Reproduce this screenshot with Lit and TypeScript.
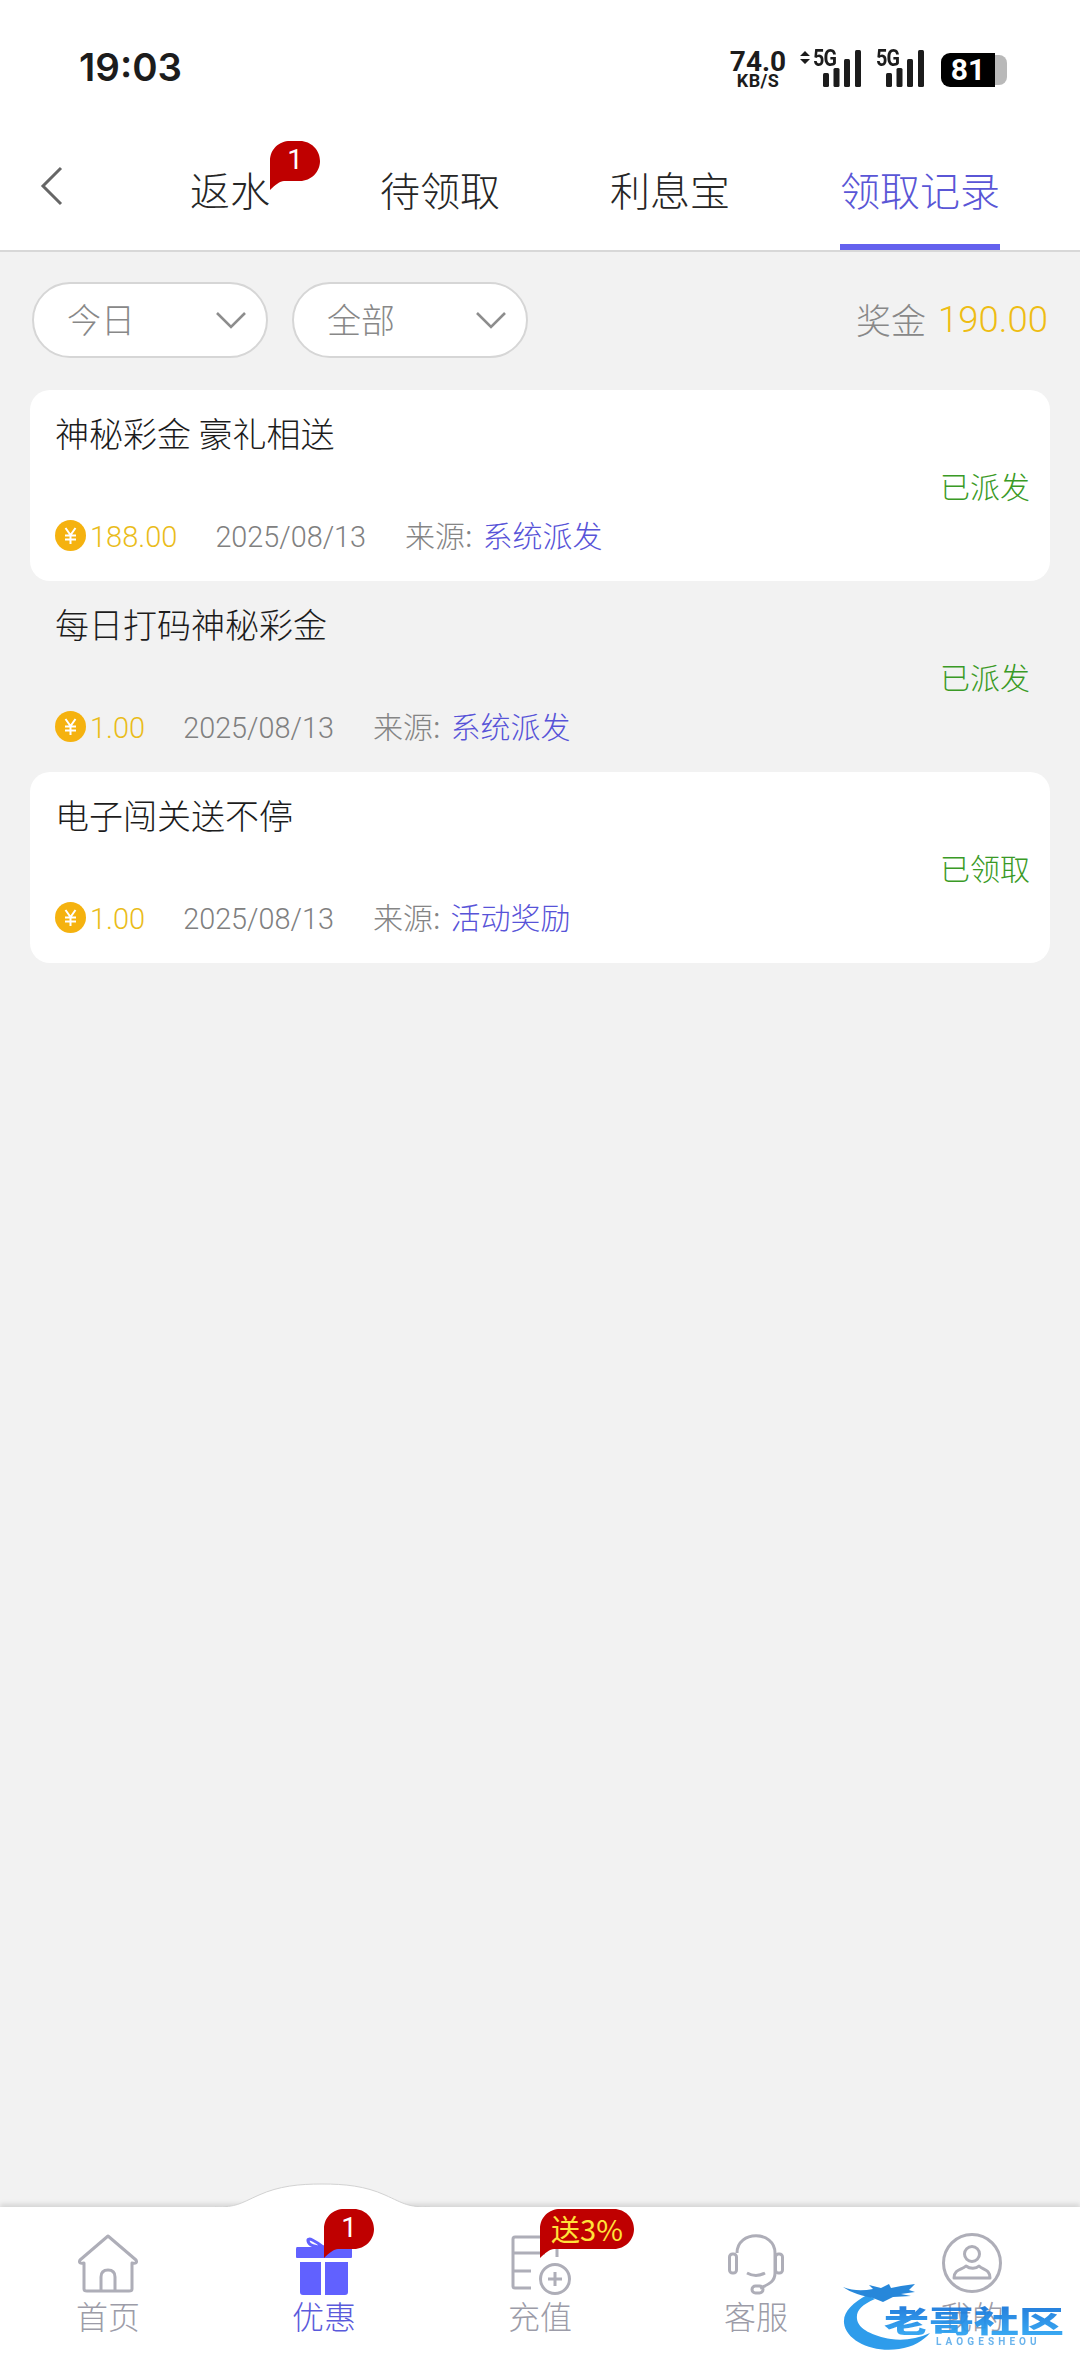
import { LitElement, html, css, svg } from "lit";
import { customElement } from "lit/decorators.js";

const bubble = (w: number) => svg`<svg class="bubble-bg" width="${w}" height="49" viewBox="0 0 ${w} 49"><path d="M0 49 C0 40 0 30 0 20 C0 8 9 0 20 0 H${w - 20} C${w - 9} 0 ${w} 9 ${w} 20 C${w} 31 ${w - 9} 40 ${w - 20} 40 H14 C10 40 5 44 0 49Z" fill="#bf0000"/></svg>`;

const chevron = html`<svg class="chev" width="32" height="18" viewBox="0 0 32 18"><path d="M2 2 L16 16 L30 2" fill="none" stroke="#8d8d8d" stroke-width="2.6"/></svg>`;

const coin = html`<svg class="coin" width="31" height="31" viewBox="0 0 31 31"><circle cx="15.5" cy="15.5" r="15.5" fill="#f5b20f"/><path d="M10.5 8 L15.5 15 L20.5 8 M10 15.5 H21 M10 19.5 H21 M15.5 15 V24" fill="none" stroke="#fff" stroke-width="2"/></svg>`;

const records = [
  { title: "神秘彩金 豪礼相送", status: "已派发", amount: "188.00", source: "系统派发", bg: true },
  { title: "每日打码神秘彩金", status: "已派发", amount: "1.00", source: "系统派发", bg: false },
  { title: "电子闯关送不停", status: "已领取", amount: "1.00", source: "活动奖励", bg: true },
];

const bars = html`<svg width="38" height="37" viewBox="0 0 38 37"><g fill="#1c1c1c"><rect x="0" y="23" width="6" height="14" rx="1.5"/><rect x="10.5" y="18" width="6" height="19" rx="1.5"/><rect x="21" y="9" width="6" height="28" rx="1.5"/><rect x="32" y="0" width="6" height="37" rx="1.5"/></g></svg>`;

@customElement("app-root")
export class AppRoot extends LitElement {
  static styles = css`
    :host { display: flex; flex-direction: column; width: 1080px; height: 2378px; background: #f2f2f2;
      font-family: "Noto Sans CJK SC", Roboto, sans-serif; font-weight: 300; overflow: hidden; }
    .top { background: #fff; border-bottom: 2px solid #d8d8d8; height: 250px; display: flex; flex-direction: column; }
    .status { height: 136px; display: flex; align-items: flex-start; padding: 48px 73px 0 79px; justify-content: space-between; box-sizing: border-box; }
    .time { font: 600 38.5px/38px Inter, sans-serif; color: #1c1c1c; }
    .sys { display: flex; align-items: flex-start; }
    .speed { width: 58px; display: flex; flex-direction: column; align-items: center; color: #1c1c1c; margin-top: 1.5px; }
    .speed b { font: 700 28px/23px Roboto, sans-serif; }
    .speed i { font: 700 18px/15px Roboto, sans-serif; letter-spacing: .4px; font-style: normal; }
    .sig { position: relative; display: flex; align-items: flex-start; height: 40px; margin-top: 2px; margin-left: 2px; }
    .sig.first { margin-left: 13px; }
    .sig .g { position: absolute; left: 13px; top: -1px; font: 700 23px/20px Roboto, sans-serif; color: #1c1c1c; letter-spacing: -1px; transform: scaleX(.86); transform-origin: 0 50%; }
    .sig svg { margin-left: 23px; }
    .sig svg.arrows { position: absolute; top: 1px; left: 0; margin-left: 0; }
    .bat { margin-left: 17px; display: flex; height: 34px; margin-top: 5px; }
    .bat b { width: 54px; background: #000; color: #fff; border-radius: 9px 0 0 9px; text-align: center; font: 700 30px/34px Roboto, sans-serif; }
    .bat i { width: 12px; margin: 2px 0; background: #b9b9b9; border-radius: 0 8px 8px 0; }
    .tabs { display: flex; align-items: stretch; flex: 1; padding-left: 40px; }
    .back { margin: 30px 126px 0 0; width: 24px; height: 40px; }
    .tab { position: relative; font-size: 40px; line-height: 56px; color: #262626; margin-right: 110px; padding-top: 25px; box-sizing: border-box; }
    .tab.on { color: #5a56d6; margin-right: 0; border-bottom: 6px solid #6461ee; height: 114px; }
    .bubble { position: absolute; display: flex; justify-content: center; }
    .bubble-bg { display: block; }
    .bubble span { position: absolute; left: 0; right: 0; top: 0; text-align: center; color: #fff; height: 40px; font: 400 28px/38px Roboto, sans-serif; }
    .tab .bubble { left: 80px; top: 5px; }
    main { flex: 1; min-height: 0; }
    .filters { display: flex; align-items: center; padding: 30px 32px 0; gap: 24px; }
    .pill { width: 236px; height: 76px; box-sizing: border-box; border: 2px solid #d6d6d6; border-radius: 38px; background: #fff; display: flex; align-items: center; justify-content: space-between; padding: 0 19px 3px 33px; color: #888; font-size: 34px; }
    .chev { margin-top: 3px; }
    .bonus { margin-left: auto; color: #888; font-size: 35px; display: flex; align-items: center; gap: 12px; padding-bottom: 3px; }
    .bonus b { font: 300 36.5px/50px Roboto, sans-serif; color: #eebd14; padding-top: 3px; }
    .list { margin: 32px 30px 0; }
    .card { height: 191px; box-sizing: border-box; border-radius: 20px; padding: 20px 20px 0 25px; }
    .card.bg { background: #fff; }
    .title { font-size: 34px; line-height: 46px; color: #1c1c1c; }
    .state { text-align: right; font-size: 30px; line-height: 40px; color: #3a9a26; margin-top: 9px; }
    .meta { display: flex; align-items: center; margin-top: 8.5px; height: 40px; font-size: 30px; color: #858585; }
    .coin { margin-right: 4px; flex: none; margin-top: 4px; }
    .amount { font: 300 29px/40px Roboto, sans-serif; color: #eabc1a; margin-right: 38px; padding-top: 6px; }
    .date { font: 300 28.8px/40px Roboto, sans-serif; color: #808080; margin-right: 39px; padding-top: 6px; }
    .src { color: #5753d8; margin-left: 10px; }
    nav { position: relative; height: 171px; background: #fff; display: flex; box-shadow: 0 -3px 5px rgba(0,0,0,.12); }
    .bump { position: absolute; left: 215px; top: -24px; }
    .item { position: relative; width: 216px; flex: none; display: flex; flex-direction: column; align-items: center; padding-top: 26px; box-sizing: border-box; font-size: 32px; line-height: 46px; color: #9c9ca8; }
    .item svg.ic { display: block; height: 62px; margin-bottom: -3px; }
    .item.on { color: #5a5adb; }
    .item .bubble { left: 108px; top: 2px; }
    .bubble.b span { color: #ffe23a; font: 400 29px/38px "Noto Sans CJK SC", Roboto, sans-serif; white-space: nowrap; }
    .mark { position: absolute; left: 843px; top: 76px; width: 228px; height: 70px; opacity: .94; }
    .mark svg { position: absolute; left: 0; top: 0; filter: blur(.5px); }
    .mark .cn { position: absolute; left: 41px; top: 11px; font: 900 45px/50px "Noto Sans CJK SC", sans-serif; color: #1e90e8;
      background: linear-gradient(#1672d8, #2ea4f2); -webkit-background-clip: text; background-clip: text; -webkit-text-fill-color: transparent;
      white-space: nowrap; transform: scaleY(.66); transform-origin: 50% 50%; }
    .mark .en { position: absolute; left: 93px; top: 53px; font: 700 10px/12px Roboto, sans-serif; color: #62b0ec; letter-spacing: 4.1px; white-space: nowrap; }
  `;

  render() {
    const sc = "#aeaeb8";
    return html`
      <div class="top">
        <div class="status">
          <div class="time">19:03</div>
          <div class="sys">
            <div class="speed"><b>74.0</b><i>KB/S</i></div>
            <div class="sig first">
              <svg class="arrows" width="10" height="13" viewBox="0 0 10 13"><path d="M5 0 L10 5 H0Z M5 13 L0 8 H10Z" fill="#1c1c1c"/></svg>
              <span class="g">5G</span>${bars}
            </div>
            <div class="sig"><span class="g">5G</span>${bars}</div>
            <div class="bat"><b>81</b><i></i></div>
          </div>
        </div>
        <div class="tabs">
          <svg class="back" viewBox="0 0 24 40"><path d="M21 2 L3 20 L21 38" fill="none" stroke="#666" stroke-width="3"/></svg>
          <div class="tab">返水<div class="bubble">${bubble(50)}<span>1</span></div></div>
          <div class="tab">待领取</div>
          <div class="tab">利息宝</div>
          <div class="tab on">领取记录</div>
        </div>
      </div>
      <main>
        <div class="filters">
          <div class="pill">今日${chevron}</div>
          <div class="pill">全部${chevron}</div>
          <div class="bonus">奖金<b>190.00</b></div>
        </div>
        <div class="list">
          ${records.map(r => html`
            <div class="card ${r.bg ? "bg" : ""}">
              <div class="title">${r.title}</div>
              <div class="state">${r.status}</div>
              <div class="meta">${coin}<span class="amount">${r.amount}</span><span class="date">2025/08/13</span>来源:<span class="src">${r.source}</span></div>
            </div>`)}
        </div>
      </main>
      <nav>
        <svg class="bump" width="215" height="26" viewBox="0 0 215 26"><path d="M0 24 C22 24 24 21 44 12 C64 3 84 1 107 1 C130 1 150 3 170 12 C190 21 192 24 215 24 V26 H0Z" fill="#fff" stroke="#d2d2d2" stroke-width="1"/><rect x="0" y="24" width="215" height="3" fill="#fff"/></svg>
        <div class="item">
          <svg class="ic" width="64" height="62" viewBox="0 0 64 62"><path d="M4 27 L32 3 L60 27 Q62 31 56 30 V56 Q56 58 53 58 H11 Q8 58 8 56 V30 Q2 31 4 27Z M25 58 V44 Q25 37 32 37 Q39 37 39 44 V58" fill="none" stroke="${sc}" stroke-width="3" stroke-linejoin="round"/></svg>
          首页
        </div>
        <div class="item on">
          <svg class="ic" width="58" height="62" viewBox="0 0 58 62"><path d="M28 14 C22 9 12 3 13 8 C14 13 22 14 28 14Z M29 14 C35 9 45 3 44 8 C43 13 36 14 29 14Z" fill="none" stroke="#6161ff" stroke-width="3"/><path d="M2 14 H56 Q57 14 57 16 V24 Q57 25 56 25 H2 Q1 25 1 24 V16 Q1 14 2 14Z" fill="#6161ff"/><path d="M5 29 H26 V62 H8 Q5 62 5 59Z M30 29 H53 V59 Q53 62 50 62 H30Z" fill="#6161ff"/></svg>
          优惠
          <div class="bubble">${bubble(50)}<span>1</span></div>
        </div>
        <div class="item">
          <svg class="ic" width="62" height="62" viewBox="0 0 62 62"><path d="M48 24 V4 H6 Q4 4 4 6 V53 Q4 55 6 55 H22 M4 20 H36 M4 38 H22" fill="none" stroke="${sc}" stroke-width="3"/><circle cx="46" cy="46" r="14.5" fill="none" stroke="${sc}" stroke-width="3"/><path d="M39 46 H53 M46 39 V53" stroke="${sc}" stroke-width="3"/></svg>
          充值
          <div class="bubble b">${bubble(94)}<span>送3%</span></div>
        </div>
        <div class="item">
          <svg class="ic" width="56" height="62" viewBox="0 0 56 62"><path d="M9 20 C9 -3 47 -3 47 20 V40 C47 48 42 51 32 55" fill="none" stroke="${sc}" stroke-width="3"/><rect x="1.5" y="21" width="7" height="19" rx="3" fill="none" stroke="${sc}" stroke-width="3"/><rect x="47.5" y="21" width="7" height="19" rx="3" fill="none" stroke="${sc}" stroke-width="3"/><path d="M19 40 Q28 45 37 40" fill="none" stroke="${sc}" stroke-width="3"/><rect x="24" y="53" width="11" height="7" rx="3.5" fill="none" stroke="${sc}" stroke-width="3"/></svg>
          客服
        </div>
        <div class="item">
          <svg class="ic" width="60" height="62" viewBox="0 0 60 62"><circle cx="30" cy="30" r="28.5" fill="none" stroke="${sc}" stroke-width="3"/><circle cx="30" cy="21" r="7.5" fill="none" stroke="${sc}" stroke-width="3"/><path d="M12 45 C12 36 20 37 24 33 C28 36 34 36 37 33 C41 37 48 36 48 45Z" fill="none" stroke="${sc}" stroke-width="3" stroke-linejoin="round"/></svg>
          我的
        </div>
        <div class="mark">
          <svg width="100" height="70" viewBox="0 0 100 70"><path d="M24 12 C10 20 0 28 1 40 C3 58 30 70 56 66 C70 64 80 58 87 50 C74 56 60 58 48 56 C30 53 15 46 14 36 C13 28 18 22 32 16Z" fill="#2196ea"/><path d="M0 4 C10 8 20 8 30 6 L26 2 L38 5 L46 1 L48 5 L58 3 L72 1 L66 7 L72 9 L58 11 L68 13 L50 14 L40 19 L30 15 C20 13 8 10 0 4Z" fill="#1a80d8"/></svg>
          <div class="cn">老哥社区</div>
          <div class="en">LAOGESHEOU</div>
        </div>
      </nav>
    `;
  }
}
